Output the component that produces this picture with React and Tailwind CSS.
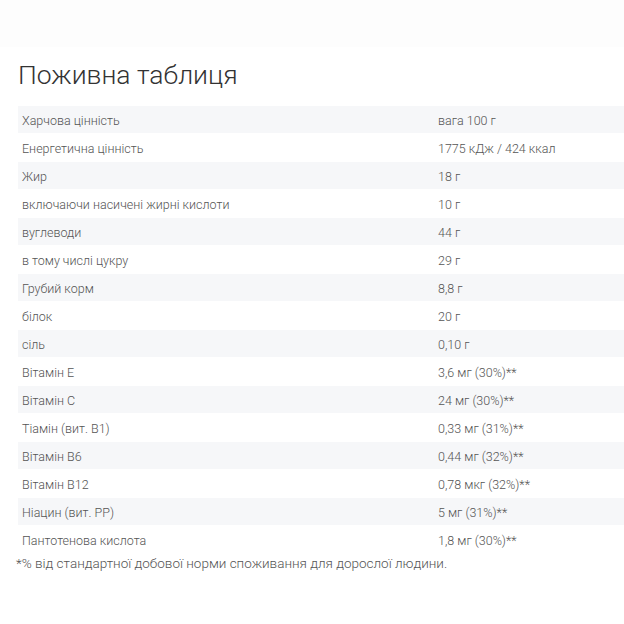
import React from "react";

const rows = [
  ["Харчова цінність", "вага 100 г"],
  ["Енергетична цінність", "1775 кДж / 424 ккал"],
  ["Жир", "18 г"],
  ["включаючи насичені жирні кислоти", "10 г"],
  ["вуглеводи", "44 г"],
  ["в тому числі цукру", "29 г"],
  ["Грубий корм", "8,8 г"],
  ["білок", "20 г"],
  ["сіль", "0,10 г"],
  ["Вітамін Е", "3,6 мг (30%)**"],
  ["Вітамін С", "24 мг (30%)**"],
  ["Тіамін (вит. В1)", "0,33 мг (31%)**"],
  ["Вітамін В6", "0,44 мг (32%)**"],
  ["Вітамін В12", "0,78 мкг (32%)**"],
  ["Ніацин (вит. РР)", "5 мг (31%)**"],
  ["Пантотенова кислота", "1,8 мг (30%)**"],
];

export default function App() {
  return (
    <div className="min-h-[624px] bg-white" style={{ fontFamily: "Roboto, 'Noto Sans', sans-serif" }}>
      <div className="h-[47px] bg-[#fdfdfd]" />
      <div className="pl-[18px]">
        <h1 className="mt-[10px] h-[36px] text-[26.5px] leading-[36px] font-light text-[#333]">
          Поживна таблиця
        </h1>
        <div className="mt-[13px]">
          {rows.map(([a, b], i) => (
            <div
              key={i}
              className={`flex h-[28px] items-center pt-[3px] text-[12.5px] font-light text-[#555] border-b border-white ${i % 2 === 0 ? "bg-[#f6f7f9]" : "bg-white"}`}
            >
              <div className="w-[420px] pl-[4px]">{a}</div>
              <div>{b}</div>
            </div>
          ))}
        </div>
      </div>
      <p className="pl-[16px] -mt-[1px] text-[13.5px] leading-[20px] font-light text-[#555]">
        *% від стандартної добової норми споживання для дорослої людини.
      </p>
    </div>
  );
}
